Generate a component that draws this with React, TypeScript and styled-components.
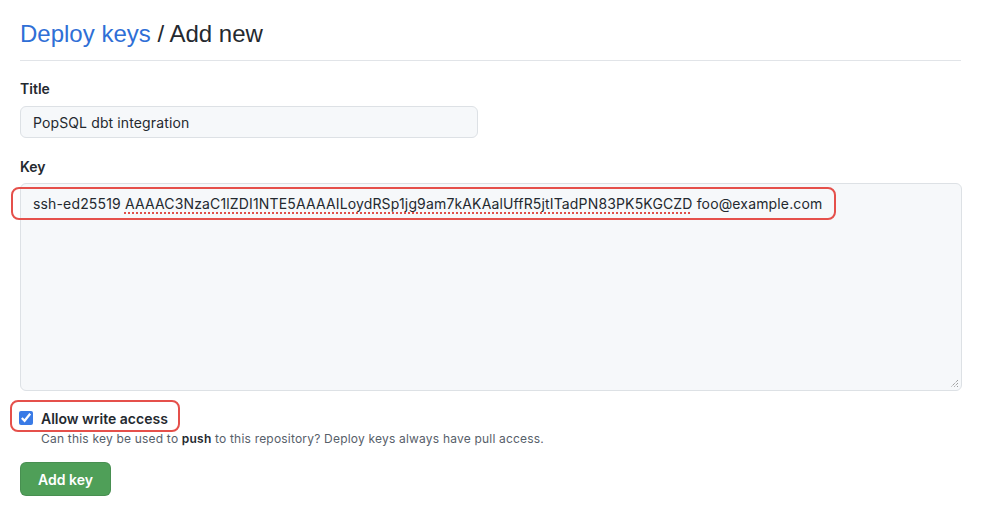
import React from "react";
import styled, { createGlobalStyle } from "styled-components";

const Global = createGlobalStyle`
  html, body { margin: 0; padding: 0; background: #ffffff; }
  body {
    font-family: Inter, "Liberation Sans", Arial, sans-serif;
    color: #24292f;
    -webkit-font-smoothing: antialiased;
  }
`;

const Page = styled.div`
  width: 941px;
  padding: 19px 0 0 20px;
`;

const Subhead = styled.div`
  display: flex;
  align-items: center;
  height: 30px;
  padding-bottom: 11px;
  border-bottom: 1px solid #e1e4e8;
  margin-bottom: 17px;
`;

const Heading = styled.h2`
  margin: 0;
  font-family: "Liberation Sans", Arial, sans-serif;
  font-size: 24px;
  font-weight: 400;
  line-height: 30px;
  color: #24292f;
`;

const Crumb = styled.a`
  color: #2f6fd6;
  text-decoration: none;
`;

const Field = styled.div<{ $gap?: number }>`
  display: flex;
  flex-direction: column;
  margin-bottom: ${(p) => p.$gap ?? 18}px;
`;

const Label = styled.label<{ $mb?: number }>`
  font-size: 14px;
  font-weight: 600;
  line-height: 21px;
  margin-bottom: ${(p) => p.$mb ?? 7}px;
  color: #24292f;
`;

const TextInput = styled.input`
  width: 458px;
  height: 32px;
  box-sizing: border-box;
  padding: 0 12px;
  font-family: inherit;
  font-size: 14px;
  letter-spacing: 0.12px;
  color: #24292f;
  background: #f6f8fa;
  border: 1px solid #dde1e5;
  border-radius: 6px;
  outline: none;
`;

const KeyBox = styled.div`
  position: relative;
  box-sizing: border-box;
  width: 942px;
  height: 208px;
  padding: 10px 12px;
  font-size: 14px;
  line-height: 20px;
  letter-spacing: 0.15px;
  color: #24292f;
  background: #f6f8fa;
  border: 1px solid #dde1e5;
  border-radius: 6px;
  white-space: nowrap;
`;

const Misspelled = styled.span`
  text-decoration: underline dotted #e0504a;
  text-decoration-thickness: 1.5px;
  text-underline-offset: 3px;
`;

const Highlight = styled.div<{ $l: number; $t: number; $w: number; $h: number }>`
  position: absolute;
  left: ${(p) => p.$l}px;
  top: ${(p) => p.$t}px;
  width: ${(p) => p.$w}px;
  height: ${(p) => p.$h}px;
  box-sizing: border-box;
  border: 2px solid #e5504b;
  border-radius: 8px;
  pointer-events: none;
`;

const Grip = styled.svg`
  position: absolute;
  right: 2px;
  bottom: 2px;
`;

const CheckRow = styled.div`
  position: relative;
  display: flex;
  align-items: center;
  gap: 8px;
  height: 20px;
  margin-top: 17px;
`;

const Check = styled.input`
  width: 14px;
  height: 14px;
  margin: 0 0 0 -1px;
  accent-color: #3a7be6;
`;

const CheckLabel = styled.label`
  font-size: 14px;
  font-weight: 600;
  color: #24292f;
`;

const Note = styled.p`
  margin: 2px 0 0 21px;
  font-size: 12px;
  line-height: 18px;
  letter-spacing: 0.2px;
  color: #57606a;
  b { color: #24292f; font-weight: 600; }
`;

const Button = styled.button`
  margin-top: 14px;
  width: 91px;
  height: 34px;
  font-family: inherit;
  font-size: 14px;
  font-weight: 600;
  color: #ffffff;
  background: #4f9f58;
  border: 1px solid rgba(27, 31, 36, 0.12);
  border-radius: 6px;
  cursor: pointer;
`;

export default function App() {
  return (
    <>
      <Global />
      <Page>
        <Subhead>
          <Heading>
            <Crumb href="#">Deploy keys</Crumb> / Add new
          </Heading>
        </Subhead>
        <Field>
          <Label>Title</Label>
          <TextInput defaultValue="PopSQL dbt integration" />
        </Field>
        <Field $gap={0}>
          <Label $mb={6}>Key</Label>
          <KeyBox>
            ssh-ed25519{" "}
            <Misspelled>AAAAC3NzaC1lZDI1NTE5AAAAILoydRSp1jg9am7kAKAalUffR5jtITadPN83PK5KGCZD</Misspelled>{" "}
            foo@example.com
            <Highlight $l={-10} $t={3} $w={825} $h={33} />
            <Grip width="10" height="10" viewBox="0 0 10 10">
              <path d="M9 2 L2 9 M9 5 L5 9 M9 8 L8 9" stroke="#777" strokeWidth="1" strokeDasharray="1 1" />
            </Grip>
          </KeyBox>
        </Field>
        <CheckRow>
          <Check type="checkbox" defaultChecked />
          <CheckLabel>Allow write access</CheckLabel>
          <Highlight $l={-10} $t={-8} $w={170} $h={32} />
        </CheckRow>
        <Note>
          Can this key be used to <b>push</b> to this repository? Deploy keys always have pull access.
        </Note>
        <Button>Add key</Button>
      </Page>
    </>
  );
}
